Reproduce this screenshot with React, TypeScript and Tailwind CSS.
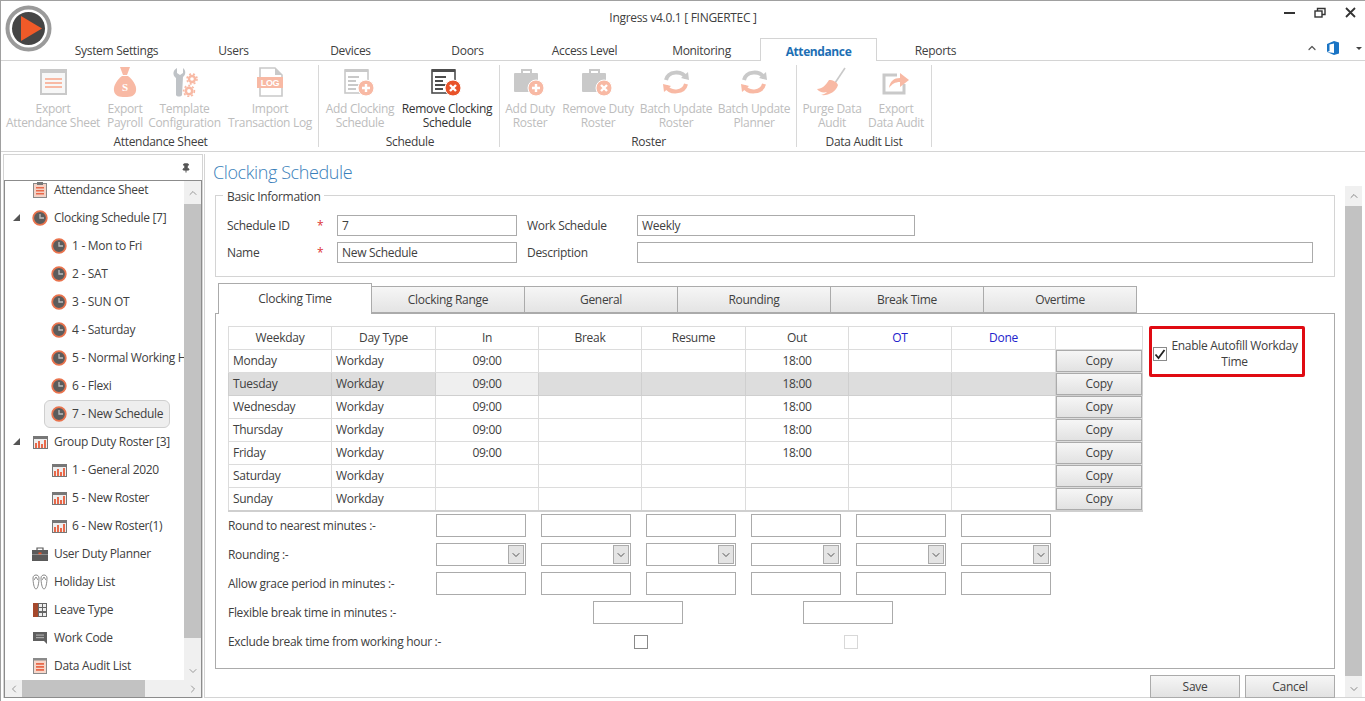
import type { ReactNode } from "react";
import { ChevronDown, ChevronLeft, ChevronRight, ChevronUp, Pin } from "lucide-react";
import clsx from "clsx";

const GRAY = "#c9c9c9";
const PINK = "#f8b9a4";

function SheetIcon() {
  return (
    <svg width="28" height="28" viewBox="0 0 28 28">
      <rect x="2" y="2" width="25" height="24" fill="#f7f7f7" stroke={GRAY} strokeWidth="2" />
      <rect x="2" y="2" width="25" height="3" fill={GRAY} />
      {[10, 14, 18].map((y) => (
        <rect key={y} x="6" y={y} width="17" height="2" fill={PINK} />
      ))}
    </svg>
  );
}

function BagIcon() {
  return (
    <svg width="28" height="32" viewBox="0 0 28 32">
      <path d="M9 1 L19 1 L16 9 L12 9 Z" fill={PINK} />
      <path d="M11 10 L17 10 C21 13 26 19 25 25 C24 30 20 31 14 31 C8 31 4 30 3 25 C2 19 7 13 11 10 Z" fill={PINK} />
      <text x="14" y="25" textAnchor="middle" fontSize="11" fontWeight="700" fill="#fff" fontFamily="Liberation Serif, serif">S</text>
    </svg>
  );
}

function ToolsIcon() {
  return (
    <svg width="26" height="30" viewBox="0 0 26 30">
      <path d="M5 1 L5 6 L8 8 L11 6 L11 1 C14 3 14 8 11 10 L10 28 C9 30 5 30 4 28 L4 11 C0 8 1 3 5 1 Z" fill="#bfc3c7" />
      <circle cx="20" cy="12" r="3" fill="none" stroke={PINK} strokeWidth="2.4" />
      <circle cx="20" cy="12" r="5" fill="none" stroke={PINK} strokeWidth="1.6" strokeDasharray="2 2" />
      <circle cx="17" cy="24" r="3.2" fill="none" stroke={PINK} strokeWidth="2.6" />
      <circle cx="17" cy="24" r="5.4" fill="none" stroke={PINK} strokeWidth="1.6" strokeDasharray="2 2" />
    </svg>
  );
}

function LogIcon() {
  return (
    <svg width="28" height="30" viewBox="0 0 28 30">
      <path d="M4 1 L19 1 L26 8 L26 29 L4 29 Z" fill="#fff" stroke={GRAY} strokeWidth="1.6" />
      <path d="M19 1 L19 8 L26 8 Z" fill={GRAY} />
      <rect x="1" y="10" width="26" height="11" fill={PINK} />
      <text x="14" y="19" textAnchor="middle" fontSize="9" fontWeight="700" fill="#fff" fontFamily="Liberation Sans, sans-serif">LOG</text>
    </svg>
  );
}

function BadgeMark({ kind, color }: { kind: "add" | "remove"; color: string }) {
  return (
    <g>
      <circle cx="22" cy="20" r="8" fill={color} stroke="#fff" strokeWidth="1" />
      {kind === "add" ? (
        <path d="M22 16 V24 M18 20 H26" stroke="#fff" strokeWidth="2.4" />
      ) : (
        <path d="M19 17 L25 23 M25 17 L19 23" stroke="#fff" strokeWidth="2.4" />
      )}
    </g>
  );
}

function ScheduleIcon({ kind, active }: { kind: "add" | "remove"; active?: boolean }) {
  const ink = active ? "#4d4d4d" : GRAY;
  const badge = active ? "#e8532a" : PINK;
  return (
    <svg width="32" height="28" viewBox="0 0 32 28">
      <rect x="1" y="2" width="23" height="23" fill="#fff" stroke={ink} strokeWidth="1.6" />
      <rect x="1" y="1" width="23" height="3" fill={ink} />
      {[8, 12, 16, 20].map((y, i) => (
        <rect key={y} x="4" y={y} width={i % 2 ? 8 : 11} height="2" fill={ink} />
      ))}
      <BadgeMark kind={kind} color={badge} />
    </svg>
  );
}

function RosterIcon({ kind }: { kind: "add" | "remove" }) {
  return (
    <svg width="32" height="28" viewBox="0 0 32 28">
      <path d="M8 5 V2 H17 V5" fill="none" stroke={GRAY} strokeWidth="2" />
      <rect x="0" y="5" width="24" height="19" rx="1" fill={GRAY} />
      <BadgeMark kind={kind} color={PINK} />
    </svg>
  );
}

function BatchIcon() {
  return (
    <svg width="28" height="26" viewBox="0 0 28 26">
      <path d="M4 11 C6 2 20 1 24 9" fill="none" stroke={GRAY} strokeWidth="4" />
      <path d="M19 9 L27 11 L26 3 Z" fill={GRAY} />
      <path d="M24 15 C22 24 8 25 4 17" fill="none" stroke={PINK} strokeWidth="4" />
      <path d="M9 17 L1 15 L2 23 Z" fill={PINK} />
    </svg>
  );
}

function BroomIcon() {
  return (
    <svg width="32" height="30" viewBox="0 0 32 30">
      <path d="M29 1 L19 16" stroke={GRAY} strokeWidth="1.6" />
      <path d="M13 13 C17 13 21 15 22 18 C20 25 12 29 5 28 C9 27 10 26 11 25 C7 26 3 25 1 22 C6 22 10 18 13 13 Z" fill={PINK} />
    </svg>
  );
}

function ExportIcon() {
  return (
    <svg width="28" height="26" viewBox="0 0 28 26">
      <path d="M15 6 H2 V24 H22 V15" fill="none" stroke={GRAY} strokeWidth="3" />
      <path d="M7 19 C8 12 12 9 18 9 V4 L27 11 L18 18 V13 C13 13 10 15 7 19 Z" fill={PINK} />
    </svg>
  );
}

type RibbonButton = { top: string; bottom: string; width: string; icon: ReactNode; active?: boolean };

const ribbonGroups: { label: string; width: string; pad: string; buttons: RibbonButton[] }[] = [
  {
    label: "Attendance Sheet",
    width: "w-[318px]",
    pad: "pl-[2px]",
    buttons: [
      { top: "Export", bottom: "Attendance Sheet", width: "w-[100px]", icon: <SheetIcon /> },
      { top: "Export", bottom: "Payroll", width: "w-[44px]", icon: <BagIcon /> },
      { top: "Template", bottom: "Configuration", width: "w-[75px]", icon: <ToolsIcon /> },
      { top: "Import", bottom: "Transaction Log", width: "w-[96px]", icon: <LogIcon /> },
    ],
  },
  {
    label: "Schedule",
    width: "w-[181px]",
    pad: "pl-[2px]",
    buttons: [
      { top: "Add Clocking", bottom: "Schedule", width: "w-[78px]", icon: <ScheduleIcon kind="add" /> },
      { top: "Remove Clocking", bottom: "Schedule", width: "w-[96px]", icon: <ScheduleIcon kind="remove" active />, active: true },
    ],
  },
  {
    label: "Roster",
    width: "w-[297px]",
    pad: "pl-[1px]",
    buttons: [
      { top: "Add Duty", bottom: "Roster", width: "w-[58px]", icon: <RosterIcon kind="add" /> },
      { top: "Remove Duty", bottom: "Roster", width: "w-[78px]", icon: <RosterIcon kind="remove" /> },
      { top: "Batch Update", bottom: "Roster", width: "w-[78px]", icon: <BatchIcon /> },
      { top: "Batch Update", bottom: "Planner", width: "w-[78px]", icon: <BatchIcon /> },
    ],
  },
  {
    label: "Data Audit List",
    width: "w-[135px]",
    pad: "pl-0",
    buttons: [
      { top: "Purge Data", bottom: "Audit", width: "w-[70px]", icon: <BroomIcon /> },
      { top: "Export", bottom: "Data Audit", width: "w-[58px]", icon: <ExportIcon /> },
    ],
  },
];

const menuTabs = ["System Settings", "Users", "Devices", "Doors", "Access Level", "Monitoring", "Attendance", "Reports"];

function ClockIcon() {
  return (
    <svg width="16" height="16" viewBox="0 0 16 16">
      <circle cx="8" cy="8" r="6.8" fill="#5c5c5c" stroke="#e9734d" strokeWidth="1.8" />
      <path d="M8 4 V8 H12" fill="none" stroke="#bdbdbd" strokeWidth="1.3" />
    </svg>
  );
}

function CalendarBarsIcon() {
  return (
    <svg width="15" height="13" viewBox="0 0 15 13">
      <rect x="0" y="0" width="15" height="13" fill="#777" />
      <rect x="1" y="3" width="13" height="9" fill="#eee" />
      <rect x="2" y="7" width="2" height="5" fill="#e8694a" />
      <rect x="5" y="5" width="2" height="7" fill="#e8694a" />
      <rect x="8" y="8" width="2" height="4" fill="#e8694a" />
      <rect x="11" y="4" width="2" height="8" fill="#e8694a" />
    </svg>
  );
}

function ClipboardIcon() {
  return (
    <svg width="14" height="16" viewBox="0 0 14 16">
      <rect x="0.5" y="1.5" width="13" height="14" fill="#f4d2c6" stroke="#8a8a8a" />
      <rect x="4" y="0" width="6" height="3" fill="#777" />
      {[5, 8, 11].map((y) => (
        <rect key={y} x="3" y={y} width="8" height="1.5" fill="#e8694a" />
      ))}
    </svg>
  );
}

function BriefcaseIcon() {
  return (
    <svg width="16" height="14" viewBox="0 0 16 14">
      <path d="M5 3 V1 H11 V3" fill="none" stroke="#5a5a5a" strokeWidth="1.2" />
      <rect x="0" y="3" width="16" height="11" fill="#5a5a5a" />
      <rect x="6.5" y="5.5" width="3" height="2.5" fill="#e8532a" />
      <rect x="0" y="7" width="16" height="0.8" fill="#999" />
    </svg>
  );
}

function FlipFlopIcon() {
  return (
    <svg width="16" height="16" viewBox="0 0 16 16" fill="none" stroke="#8a8a8a" strokeWidth="1">
      <path d="M1 4 C1 0 7 0 7 4 C7 8 6 15 4 15 C2 15 1 8 1 4 Z" />
      <path d="M9 4 C9 0 15 0 15 4 C15 8 14 15 12 15 C10 15 9 8 9 4 Z" />
      <path d="M2 6 L4 3 L6 6 M10 6 L12 3 L14 6" />
    </svg>
  );
}

function LeaveGridIcon() {
  return (
    <svg width="14" height="14" viewBox="0 0 14 14">
      <rect width="14" height="14" fill="#666" />
      <rect x="0" y="0" width="5" height="14" fill="#a5482c" />
      {[1, 5, 10].map((y) =>
        [6, 10].map((x) => <rect key={`${x}-${y}`} x={x} y={y} width="3" height="3" fill="#eee" />)
      )}
    </svg>
  );
}

function WorkCodeIcon() {
  return (
    <svg width="15" height="14" viewBox="0 0 15 14">
      <path d="M0 1 H14 V10 H14 V13 L11 10 H0 Z" fill="#5f5f5f" />
      <rect x="3" y="3.5" width="8" height="1.2" fill="#aaa" />
      <rect x="3" y="6" width="8" height="1.2" fill="#aaa" />
    </svg>
  );
}

function AuditDocIcon() {
  return (
    <svg width="14" height="16" viewBox="0 0 14 16">
      <rect x="0.5" y="0.5" width="13" height="15" fill="#f6d6ca" stroke="#8a8a8a" />
      <rect x="0.5" y="0.5" width="13" height="2" fill="#8a8a8a" />
      {[5, 8, 11].map((y) => (
        <rect key={y} x="3" y={y} width="8" height="1.8" fill="#e8694a" />
      ))}
    </svg>
  );
}

type TreeRow = { label: string; level: 0 | 1; icon: ReactNode; open?: boolean; selected?: boolean };

const treeRows: TreeRow[] = [
  { label: "Attendance Sheet", level: 0, icon: <ClipboardIcon /> },
  { label: "Clocking Schedule [7]", level: 0, icon: <ClockIcon />, open: true },
  { label: "1 - Mon to Fri", level: 1, icon: <ClockIcon /> },
  { label: "2 - SAT", level: 1, icon: <ClockIcon /> },
  { label: "3 - SUN OT", level: 1, icon: <ClockIcon /> },
  { label: "4 - Saturday", level: 1, icon: <ClockIcon /> },
  { label: "5 - Normal Working Hours", level: 1, icon: <ClockIcon /> },
  { label: "6 - Flexi", level: 1, icon: <ClockIcon /> },
  { label: "7 - New Schedule", level: 1, icon: <ClockIcon />, selected: true },
  { label: "Group Duty Roster [3]", level: 0, icon: <CalendarBarsIcon />, open: true },
  { label: "1 - General 2020", level: 1, icon: <CalendarBarsIcon /> },
  { label: "5 - New Roster", level: 1, icon: <CalendarBarsIcon /> },
  { label: "6 - New Roster(1)", level: 1, icon: <CalendarBarsIcon /> },
  { label: "User Duty Planner", level: 0, icon: <BriefcaseIcon /> },
  { label: "Holiday List", level: 0, icon: <FlipFlopIcon /> },
  { label: "Leave Type", level: 0, icon: <LeaveGridIcon /> },
  { label: "Work Code", level: 0, icon: <WorkCodeIcon /> },
  { label: "Data Audit List", level: 0, icon: <AuditDocIcon /> },
];

const weekdays = [
  { day: "Monday", times: true },
  { day: "Tuesday", times: true, selected: true },
  { day: "Wednesday", times: true },
  { day: "Thursday", times: true },
  { day: "Friday", times: true },
  { day: "Saturday", times: false },
  { day: "Sunday", times: false },
];

const inputCols = [0, 1, 2, 3, 4, 5];
const scheduleTabs = ["Clocking Range", "General", "Rounding", "Break Time", "Overtime"];

function TreeItem({ row }: { row: TreeRow }) {
  return (
    <div className={clsx("flex h-[28px] items-center whitespace-nowrap", row.level === 0 ? "pl-[26px]" : "pl-[39px]")}>
      <div className={clsx("relative flex h-[28px] items-center rounded-md border", row.level === 1 && "px-[6px]", row.selected ? "border-[#cfcfcf] bg-[#eeeeee]" : "border-transparent")}>
        {row.open && (
          <span className="absolute left-[-19px] top-[9px] h-0 w-0 border-b-[7px] border-l-[7px] border-b-[#555] border-l-transparent" />
        )}
        <span className="flex w-[16px] justify-center">{row.icon}</span>
        <span className={clsx("text-[#404040]", row.level === 0 ? "ml-[6px]" : "ml-[5px]")}>{row.label}</span>
      </div>
    </div>
  );
}

function TextBox({ className, value }: { className: string; value?: string }) {
  return (
    <div className={clsx("flex items-center border border-[#ababab] bg-white px-[4px] text-[#404040]", className)}>{value}</div>
  );
}

function Select() {
  return (
    <div className="flex h-[23px] w-[90px] items-center justify-end border border-[#ababab] bg-white p-[1px]">
      <span className="flex h-[19px] w-[16px] items-center justify-center border border-[#ababab] bg-[#e4e4e4]">
        <ChevronDown size={12} strokeWidth={1.8} className="text-[#444]" />
      </span>
    </div>
  );
}

function Check({ checked, disabled }: { checked?: boolean; disabled?: boolean }) {
  return (
    <span className={clsx("flex h-[14px] w-[14px] shrink-0 items-center justify-center border bg-white", disabled ? "border-[#d8d8d8]" : "border-[#8a8a8a]")}>
      {checked && (
        <svg width="12" height="12" viewBox="0 0 12 12">
          <path d="M1.5 6.5 L4.5 10 L10.5 2" fill="none" stroke="#222" strokeWidth="1.8" />
        </svg>
      )}
    </span>
  );
}

function Btn({ label, className }: { label: string; className: string }) {
  return (
    <div className={clsx("flex items-center justify-center border border-[#ababab] bg-gradient-to-b from-[#f6f6f6] to-[#e2e2e2] text-[#404040]", className)}>{label}</div>
  );
}

export default function App() {
  return (
    <div
      className="relative flex h-[701px] w-[1365px] flex-col overflow-hidden border-l border-t border-[#a0a0a0] bg-white text-[12px] leading-[14px] tracking-[-0.3px]"
      style={{ fontFamily: '"Open Sans", "Noto Sans", sans-serif' }}
    >
      <svg width="48" height="48" viewBox="0 0 48 48" className="absolute left-[4px] top-[4px]">
        <circle cx="23.5" cy="23.5" r="21" fill="#fff" stroke="#9a9a9a" strokeWidth="4" />
        <circle cx="23.5" cy="23.5" r="16.5" fill="#454545" />
        <path d="M16 11 L37 23.5 L16 36 Z" fill="#f05a28" />
      </svg>

      <div className="relative flex h-[37px] items-center justify-center pb-[4px] text-[#404040]">
        Ingress v4.0.1 [ FINGERTEC ]
        <svg width="80" height="14" viewBox="0 0 80 14" className="absolute right-[6px] top-[3px]" fill="none" stroke="#333" strokeWidth="1.4">
          <path d="M5 9 H16" strokeWidth="2" />
          <rect x="36" y="7" width="7" height="6" />
          <path d="M38.5 7 V4.5 H46 V10.5 H43" />
          <path d="M67 4 L76 13 M76 4 L67 13" strokeWidth="1.8" />
        </svg>
      </div>

      <div className="relative flex h-[23px] border-b border-[#d4d4d4] pl-[57px] text-[#404040]">
        {menuTabs.map((tab) => (
          <div
            key={tab}
            className={clsx(
              "flex h-[23px] w-[117px] items-center justify-center pt-[3px]",
              tab === "Attendance" && "border border-b-0 border-[#d4d4d4] bg-white font-bold tracking-[-0.4px] text-[#1d6fb4]"
            )}
          >
            {tab}
          </div>
        ))}
        <div className="absolute right-[1px] top-[3px] flex items-center">
          <ChevronUp size={12} strokeWidth={2.4} className="mr-[9px] text-[#555]" />
          <svg width="12" height="14" viewBox="0 0 12 14" className="mr-[17px]">
            <path d="M0 3 L7 0 L12 1.5 V12.5 L7 14 L0 11 L7 12 V2.5 L2.5 3.5 V10 L0 11 Z" fill="#1a74c4" />
          </svg>
          <span className="mr-[2px] h-0 w-0 border-x-[3px] border-t-[3px] border-x-transparent border-t-[#444]" />
        </div>
      </div>

      <div className="flex h-[91px] border-b border-[#d4d4d4]">
        {ribbonGroups.map((group) => (
          <div key={group.label} className={clsx("flex flex-col", group.width)}>
            <div className={clsx("mt-[4px] h-[82px] border-r border-[#d8d8d8]", group.pad)}>
              <div className="flex h-[70px]">
                {group.buttons.map((btn) => (
                  <div key={btn.top + btn.bottom} className={clsx("flex flex-col items-center whitespace-nowrap text-center", btn.width, btn.active ? "text-[#333]" : "text-[#bdbdbd]")}>
                    <div className="flex h-[37px] items-center justify-center pb-[3px]">{btn.icon}</div>
                    <div>{btn.top}</div>
                    <div>{btn.bottom}</div>
                  </div>
                ))}
              </div>
              <div className="text-center text-[#404040]">{group.label}</div>
            </div>
          </div>
        ))}
      </div>

      <div className="flex min-h-0 flex-1 pb-[3px] pt-[2px]">
        <div className="ml-[2px] flex w-[200px] flex-col border border-b-0 border-[#d4d4d4]">
          <div className="flex h-[25px] items-center justify-end pr-[11px]">
            <Pin size={10} strokeWidth={2.4} fill="#555" className="text-[#555]" />
          </div>
          <div className="flex min-h-0 flex-1 flex-col border border-[#8c8c8c]">
            <div className="flex min-h-0 flex-1">
              <div className="min-w-0 flex-1 overflow-hidden">
                <div className="-mt-[5px]">
                  {treeRows.map((row) => (
                    <TreeItem key={row.label} row={row} />
                  ))}
                </div>
              </div>
              <div className="flex w-[17px] flex-col bg-[#f0f0f0]">
                <div className="flex h-[23px] items-center justify-center text-[#999]"><ChevronUp size={12} /></div>
                <div className="h-[434px] bg-[#c2c2c2]" />
                <div className="flex flex-1 items-end justify-center pb-[3px] text-[#999]"><ChevronDown size={12} /></div>
              </div>
            </div>
            <div className="flex h-[17px] items-center bg-[#f0f0f0] text-[#999]">
              <span className="flex w-[17px] justify-center"><ChevronLeft size={12} /></span>
              <div className="h-[17px] w-[123px] bg-[#c2c2c2]" />
              <span className="flex-1" />
              <span className="flex w-[17px] justify-center"><ChevronRight size={12} /></span>
            </div>
          </div>
        </div>

        <div className="ml-[1px] flex min-w-0 flex-1 flex-col border-b border-l border-[#d4d4d4]">
          <div className="flex h-[32px] items-center pl-[8px] pt-[3px] text-[18px] font-light tracking-[-0.4px] text-[#3a7fba]">Clocking Schedule</div>
          <div className="flex min-h-0 flex-1">
            <div className="w-[1140px] pl-[10px] pr-[10px] pt-[9px]">
              <div className="relative h-[82px] border border-[#d4d4d4] pl-[11px] pt-[19px] text-[#404040]">
                <span className="absolute left-[7px] top-[-6px] bg-white px-[4px]">Basic Information</span>
                <div className="flex h-[21px] items-center">
                  <span className="w-[90px]">Schedule ID</span>
                  <span className="w-[20px] text-[#d33]">*</span>
                  <TextBox className="h-[21px] w-[180px]" value="7" />
                  <span className="ml-[10px] w-[110px]">Work Schedule</span>
                  <TextBox className="h-[21px] w-[278px]" value="Weekly" />
                </div>
                <div className="mt-[6px] flex h-[21px] items-center">
                  <span className="w-[90px]">Name</span>
                  <span className="w-[20px] text-[#d33]">*</span>
                  <TextBox className="h-[21px] w-[180px]" value="New Schedule" />
                  <span className="ml-[10px] w-[110px]">Description</span>
                  <TextBox className="h-[21px] w-[676px]" />
                </div>
              </div>

              <div className="mt-[6px] flex h-[30px] items-end pl-[3px] text-[#404040]">
                <div className="relative z-10 -mb-px flex h-[31px] w-[154px] items-center justify-center border border-b-0 border-[#ababab] bg-white">Clocking Time</div>
                {scheduleTabs.map((tab) => (
                  <div key={tab} className="flex h-[27px] w-[153px] items-center justify-center border border-l-0 border-[#ababab] bg-gradient-to-b from-[#f6f6f6] to-[#e4e4e4]">{tab}</div>
                ))}
              </div>

              <div className="h-[356px] border border-[#ababab] pl-[12px] pt-[12px] text-[#404040]">
                <div className="flex items-start">
                  <table className="w-[914px] table-fixed border-collapse border-b-2 border-[#cfcfcf]">
                    <colgroup>
                      <col className="w-[103px]" /><col className="w-[104px]" /><col className="w-[103px]" /><col className="w-[103px]" />
                      <col className="w-[104px]" /><col className="w-[103px]" /><col className="w-[103px]" /><col className="w-[104px]" /><col className="w-[87px]" />
                    </colgroup>
                    <thead>
                      <tr className="h-[23px]">
                        {["Weekday", "Day Type", "In", "Break", "Resume", "Out", "OT", "Done", ""].map((h) => (
                          <th key={h} className={clsx("border border-[#dcdcdc] p-0 text-center font-normal", (h === "OT" || h === "Done") && "text-[#2222cc]")}>{h}</th>
                        ))}
                      </tr>
                    </thead>
                    <tbody>
                      {weekdays.map((row) => {
                        const cell = clsx("border p-0", row.selected ? "border-[#cfcfcf]" : "border-[#dcdcdc]");
                        return (
                          <tr key={row.day} className={clsx("h-[23px]", row.selected && "bg-[#dddddd]")}>
                            <td className={clsx(cell, "px-[4px]")}>{row.day}</td>
                            <td className={clsx(cell, "px-[4px]")}>Workday</td>
                            <td className={clsx(cell, "text-center", row.selected && "bg-[#efefef]")}>{row.times && "09:00"}</td>
                            <td className={cell} />
                            <td className={cell} />
                            <td className={clsx(cell, "text-center")}>{row.times && "18:00"}</td>
                            <td className={cell} />
                            <td className={cell} />
                            <td className={clsx(cell, "bg-white")}>
                              <Btn label="Copy" className="h-[22px] w-full" />
                            </td>
                          </tr>
                        );
                      })}
                    </tbody>
                  </table>
                  <div className="ml-[6px] flex h-[51px] w-[156px] items-center rounded-[2px] border-[3px] border-[#e00a12] pl-[1px] pt-[4px]">
                    <Check checked />
                    <span className="flex-1 text-center leading-[16px]">Enable Autofill Workday<br />Time</span>
                  </div>
                </div>

                <div className="mt-[2px] flex h-[23px] items-center">
                  <span className="w-[208px] whitespace-nowrap">Round to nearest minutes :-</span>
                  <div className="flex gap-[15px]">{inputCols.map((c) => <TextBox key={c} className="h-[23px] w-[90px]" />)}</div>
                </div>
                <div className="mt-[6px] flex h-[23px] items-center">
                  <span className="w-[208px] whitespace-nowrap">Rounding :-</span>
                  <div className="flex gap-[15px]">{inputCols.map((c) => <Select key={c} />)}</div>
                </div>
                <div className="mt-[6px] flex h-[23px] items-center">
                  <span className="w-[208px] whitespace-nowrap">Allow grace period in minutes :-</span>
                  <div className="flex gap-[15px]">{inputCols.map((c) => <TextBox key={c} className="h-[23px] w-[90px]" />)}</div>
                </div>
                <div className="mt-[6px] flex h-[23px] items-center">
                  <span className="w-[208px] whitespace-nowrap">Flexible break time in minutes :-</span>
                  <div className="ml-[157px] flex gap-[120px]">
                    <TextBox className="h-[23px] w-[90px]" />
                    <TextBox className="h-[23px] w-[90px]" />
                  </div>
                </div>
                <div className="mt-[6px] flex h-[23px] items-center">
                  <span className="w-[208px] whitespace-nowrap">Exclude break time from working hour :-</span>
                  <div className="ml-[198px] flex gap-[196px]">
                    <Check />
                    <Check disabled />
                  </div>
                </div>
              </div>

              <div className="mt-[6px] flex justify-end gap-[5px]">
                <Btn label="Save" className="h-[23px] w-[90px]" />
                <Btn label="Cancel" className="h-[23px] w-[90px]" />
              </div>
            </div>
            <div className="flex w-[17px] flex-col bg-[#f0f0f0] text-[#888]">
              <div className="flex h-[20px] items-center justify-center"><ChevronUp size={12} /></div>
              <div className="h-[470px] bg-[#c2c2c2]" />
              <div className="flex flex-1 items-end justify-center pb-[2px]"><ChevronDown size={12} /></div>
            </div>
          </div>
        </div>
      </div>
    </div>
  );
}
